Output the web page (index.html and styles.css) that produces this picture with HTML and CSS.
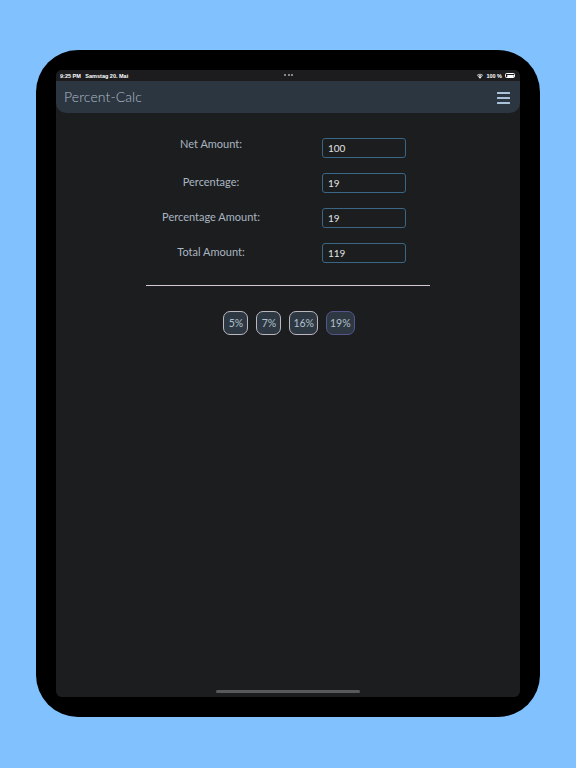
FILE: index.html
```html
<!DOCTYPE html>
<html lang="de">
<head>
<meta charset="utf-8">
<title>Percent-Calc</title>
<link rel="stylesheet" href="styles.css">
</head>
<body>
<div class="device">
  <div class="screen">
    <div class="status-bar">
      <span class="status-left">9:25 PM&nbsp;&nbsp;&nbsp;Samstag 20. Mai</span>
      <span class="status-dots"><i></i><i></i><i></i></span>
      <span class="status-right">
        <svg class="wifi" viewBox="0 0 12 9" width="8" height="6">
          <path d="M6 8.5 L3.8 6.1 A3.2 3.2 0 0 1 8.2 6.1 Z" fill="#fff"/>
          <path d="M2.6 4.9 A5 5 0 0 1 9.4 4.9 L8.6 5.7 A3.9 3.9 0 0 0 3.4 5.7 Z" fill="#fff"/>
          <path d="M1.2 3.4 A7 7 0 0 1 10.8 3.4 L10 4.2 A5.9 5.9 0 0 0 2 4.2 Z" fill="#fff"/>
        </svg>
        <span>100 %</span>
        <span class="battery"><span class="battery-fill"></span></span>
      </span>
    </div>
    <header class="app-bar">
      <h1 class="app-title">Percent-Calc</h1>
      <button class="menu-btn" aria-label="Menu">
        <span></span><span></span><span></span>
      </button>
    </header>
    <main class="content">
      <form class="calc-form">
        <label class="field-label label-first" for="net">Net Amount:</label>
        <input class="field-input" id="net" type="text" value="100">
        <label class="field-label" for="pct">Percentage:</label>
        <input class="field-input" id="pct" type="text" value="19">
        <label class="field-label" for="pctAmount">Percentage Amount:</label>
        <input class="field-input" id="pctAmount" type="text" value="19">
        <label class="field-label" for="total">Total Amount:</label>
        <input class="field-input" id="total" type="text" value="119">
      </form>
      <hr class="divider">
      <div class="presets">
        <button class="preset">5%</button>
        <button class="preset">7%</button>
        <button class="preset">16%</button>
        <button class="preset active">19%</button>
      </div>
    </main>
    <div class="home-indicator"></div>
  </div>
</div>
</body>
</html>
```
FILE: styles.css
```css
* { box-sizing: border-box; }

html, body {
  margin: 0;
  padding: 0;
  background: #80c1fe;
}

body {
  width: 576px;
  height: 768px;
  overflow: hidden;
  font-family: Lato, "Open Sans", sans-serif;
}

.device {
  margin: 50px 0 0 36px;
  width: 504px;
  height: 667px;
  background: #000;
  border-radius: 42px;
  padding: 20px;
}

.screen {
  width: 464px;
  height: 627px;
  background: #1c1d1f;
  border-radius: 6px;
  overflow: hidden;
  display: flex;
  flex-direction: column;
  position: relative;
}

/* status bar */
.status-bar {
  height: 11px;
  flex: none;
  background: #1c1c1e;
  display: flex;
  align-items: center;
  justify-content: space-between;
  padding: 0 5px 0 4px;
  color: #fff;
  font-family: "Liberation Sans", Arial, sans-serif;
  font-size: 5.5px;
  font-weight: bold;
  position: relative;
}

.status-dots {
  position: absolute;
  left: 228px;
  top: 4px;
  display: flex;
  gap: 1.5px;
}

.status-dots i {
  display: block;
  width: 2px;
  height: 2px;
  border-radius: 50%;
  background: #aaa;
}

.status-right {
  display: flex;
  align-items: center;
  gap: 2px;
}

.battery {
  display: block;
  width: 10px;
  height: 5px;
  border: 0.5px solid #fff;
  border-radius: 1.5px;
  padding: 0.5px;
  margin-left: 1px;
}

.battery-fill {
  display: block;
  width: 100%;
  height: 100%;
  background: #fff;
  border-radius: 1px;
}

/* app bar */
.app-bar {
  height: 32px;
  flex: none;
  background: #2c3640;
  border-radius: 0 0 10px 10px;
  display: flex;
  align-items: center;
  justify-content: space-between;
  padding: 0 10px 0 8px;
}

.app-title {
  margin: 0;
  font-size: 14px;
  font-weight: 300;
  color: #aebccb;
  letter-spacing: 0.1px;
  transform: translateY(-1px);
}

.menu-btn {
  width: 13px;
  height: 12px;
  padding: 0;
  border: 0;
  background: transparent;
  display: flex;
  flex-direction: column;
  justify-content: space-between;
  margin-top: 1px;
}

.menu-btn span {
  display: block;
  height: 2px;
  background: #a9c2da;
  border-radius: 0.5px;
}

/* form */
.content {
  flex: 1;
  padding: 25px 90px 0;
}

.calc-form {
  display: grid;
  grid-template-columns: 130px 84px;
  column-gap: 46px;
  row-gap: 15px;
  align-items: center;
}

.field-label {
  text-align: center;
  font-size: 11px;
  color: #a9b5c1;
  line-height: 14px;
  transform: translateY(-1px);
}

.label-first {
  transform: translateY(-4px);
}

.field-input {
  width: 84px;
  height: 20px;
  background: #1c1d1f;
  border: 1px solid #3a6686;
  border-radius: 3px;
  padding: 0 5px;
  font-family: Lato, "Open Sans", sans-serif;
  font-size: 10px;
  color: #e2e2e2;
  outline: none;
}

.divider {
  margin: 22px 0 0;
  height: 1px;
  border: 0;
  background: #d4c8d6;
  width: 284px;
}

.presets {
  margin-top: 25px;
  display: flex;
  justify-content: center;
  gap: 8px;
  padding-left: 2px;
}

.preset {
  height: 24px;
  min-width: 25px;
  padding: 0 3px;
  border: 1.5px solid #bcb6c2;
  border-radius: 7px;
  background: #2d3842;
  color: #b3c0cc;
  font-family: Lato, "Open Sans", sans-serif;
  font-size: 10.5px;
}

.preset.active {
  border-color: #55558e;
}

.home-indicator {
  position: absolute;
  left: 160px;
  bottom: 4px;
  width: 144px;
  height: 3px;
  border-radius: 2px;
  background: #58595b;
}
```
